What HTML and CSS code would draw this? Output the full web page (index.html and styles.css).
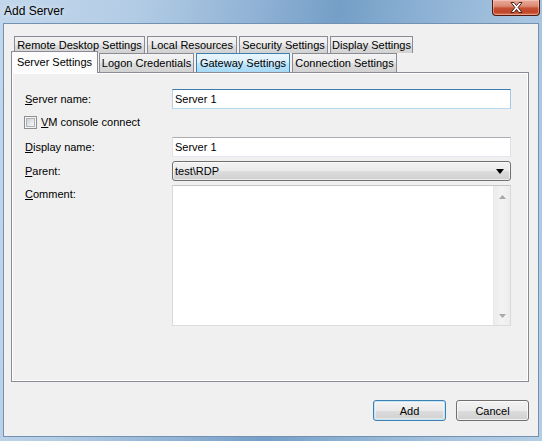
FILE: index.html
```html
<!DOCTYPE html>
<html>
<head>
<meta charset="utf-8">
<link rel="stylesheet" href="styles.css">
</head>
<body>
<div class="window">
  <div class="titlebar">
    <span class="title">Add Server</span>
    <div class="close">
      <svg width="13" height="11" viewBox="0 0 13 11"><polygon points="1,0.5 4,0.5 6.5,3.6 9,0.5 12,0.5 8.1,5.5 12,10.5 9,10.5 6.5,7.4 4,10.5 1,10.5 4.9,5.5" fill="#fff" stroke="#3a140c" stroke-width="0.9" stroke-linejoin="round"/></svg>
    </div>
  </div>
  <div class="client">
    <div class="tabs">
      <div class="tabrow back">
        <div class="tab w-rd">Remote Desktop Settings</div>
        <div class="tab w-lr">Local Resources</div>
        <div class="tab w-ss">Security Settings</div>
        <div class="tab w-ds">Display Settings</div>
      </div>
      <div class="tabrow front">
        <div class="tab selected w-sv">Server Settings</div>
        <div class="tab w-lc">Logon Credentials</div>
        <div class="tab hover w-gw">Gateway Settings</div>
        <div class="tab w-cs">Connection Settings</div>
      </div>
    </div>
    <div class="panel">
      <div class="form">
        <div class="label r1"><u>S</u>erver name:</div>
        <div class="input focused r1">Server 1</div>
        <div class="check r2"><span class="cb"><span class="cb-in"></span></span><span><u>V</u>M console connect</span></div>
        <div class="label r3"><u>D</u>isplay name:</div>
        <div class="input r3">Server 1</div>
        <div class="label r4"><u>P</u>arent:</div>
        <div class="select r4"><span>test\RDP</span>
          <svg class="arrow" width="8" height="5" viewBox="0 0 8 5"><polygon points="0,0 8,0 4,5" fill="#000"/></svg>
        </div>
        <div class="label comment r5"><u>C</u>omment:</div>
        <div class="textarea r5">
          <div class="scrollbar">
            <svg width="7" height="4" viewBox="0 0 7 4"><polygon points="3.5,0 7,4 0,4" fill="#a8a8a8"/></svg>
            <svg width="7" height="4" viewBox="0 0 7 4"><polygon points="0,0 7,0 3.5,4" fill="#a8a8a8"/></svg>
          </div>
        </div>
      </div>
    </div>
    <div class="buttons">
      <div class="btn default">Add</div>
      <div class="btn">Cancel</div>
    </div>
  </div>
</div>
</body>
</html>
```
FILE: styles.css
```css
html, body {
  margin: 0;
  padding: 0;
}
body {
  width: 542px;
  height: 441px;
  overflow: hidden;
  font-family: "Liberation Sans", Arial, sans-serif;
  font-size: 11px;
  color: #000;
}
.window {
  width: 542px;
  height: 441px;
  box-sizing: border-box;
  display: flex;
  flex-direction: column;
  background: linear-gradient(100deg, #c2d7ec 0%, #b3cce5 22%, #93b4d6 40%, #759fc7 55%, #8bb0d3 68%, #a7c4e0 85%, #b4cee6 100%);
}
.titlebar {
  position: relative;
  height: 23px;
  flex: none;
  display: flex;
  align-items: center;
}
.title {
  margin-left: 4px;
  margin-top: -2px;
  font-size: 12px;
  color: #000;
  text-shadow: 0 0 6px rgba(255,255,255,0.8);
}
.close {
  position: absolute;
  top: 0;
  right: 2px;
  width: 48px;
  height: 16px;
  box-sizing: border-box;
  border: 1px solid #4e1a10;
  border-top: none;
  border-radius: 0 0 4px 4px;
  background: linear-gradient(#e9ab9b 0%, #dc8c77 40%, #c65033 55%, #c04428 80%, #d8765a 100%);
  box-shadow: inset 0 0 0 1px rgba(255,220,210,0.45);
  display: flex;
  align-items: center;
  justify-content: center;
}
.client {
  margin: 0 3px;
  height: 414px;
  box-sizing: border-box;
  border: 1px solid #7391b1;
  background: #f0f0f0;
  padding: 12px 0 0 7px;
}
.tabs {
  width: 518px;
}
.tabrow {
  display: flex;
  gap: 2px;
}
.tabrow.back {
  height: 17px;
  margin-left: 3px;
}
.tabrow.front {
  height: 19px;
  align-items: flex-end;
}
.tab {
  box-sizing: border-box;
  border: 1px solid #898c95;
  border-bottom: none;
  background: linear-gradient(#f3f3f3 0%, #ebebeb 50%, #dedede 51%, #d2d2d2 100%);
  text-align: center;
  white-space: nowrap;
  display: flex;
  align-items: center;
  justify-content: center;
}
.back .tab { height: 17px; }
.front .tab { height: 19px; }
.front .tab.selected {
  position: relative;
  z-index: 2;
  height: 22px;
  margin-bottom: -1px;
  margin-right: -1px;
  background: #fcfcfc;
  padding-bottom: 2px;
}
.tab.hover {
  border-color: #3c7fb1;
  background: linear-gradient(#eaf6fd 0%, #d9f0fc 50%, #bee6fd 51%, #a7d9f5 100%);
}
.w-rd { width: 131px; }
.w-lr { width: 90px; }
.w-ss { width: 89px; }
.w-ds { width: 83px; }
.w-sv { width: 87px; }
.w-lc { width: 95px; }
.w-gw { width: 94px; }
.w-cs { width: 105px; }

.panel {
  width: 518px;
  height: 310px;
  box-sizing: border-box;
  border: 1px solid #898c95;
  box-shadow: inset 0 0 0 1px #ffffff;
  background: #f0f0f0;
  padding: 16px 17px 0 12px;
}
.form {
  display: grid;
  grid-template-columns: 148px 339px;
  grid-template-rows: 20px 28px 24px 24px 141px;
}
.r1 { grid-row: 1; }
.r2 { grid-row: 2; }
.r3 { grid-row: 3; }
.r4 { grid-row: 4; }
.r5 { grid-row: 5; }
.label {
  grid-column: 1;
  height: 20px;
  line-height: 20px;
  padding-left: 1px;
}
.label.comment {
  line-height: 18px;
}
.input {
  grid-column: 2;
  height: 20px;
  box-sizing: border-box;
  border: 1px solid;
  border-color: #abadb3 #dbdfe6 #e3e9ef #e2e3ea;
  background: #fff;
  line-height: 18px;
  padding-left: 2px;
}
.input.focused {
  border-color: #3d7bad #a4c9e3 #b7d9ed #b5cfe7;
}
.check {
  grid-column: 1 / 3;
  display: flex;
  align-items: center;
  gap: 4px;
  height: 28px;
  margin-top: -1px;
}
.cb {
  width: 13px;
  height: 13px;
  box-sizing: border-box;
  border: 1px solid #8e8f8f;
  background: #f4f4f4;
  padding: 1px;
  display: flex;
}
.cb-in {
  flex: 1;
  border: 1px solid #aeb3b9;
  background: linear-gradient(135deg, #cbcfd5 0%, #e3e5e8 50%, #f6f6f6 100%);
}
.select {
  grid-column: 2;
  height: 20px;
  box-sizing: border-box;
  border: 1px solid #707070;
  border-radius: 3px;
  background: linear-gradient(#f2f2f2 0%, #ebebeb 50%, #dddddd 51%, #cfcfcf 100%);
  box-shadow: inset 0 0 0 1px rgba(255,255,255,0.6);
  display: flex;
  align-items: center;
  justify-content: space-between;
  padding: 0 6px 0 2px;
}
.arrow {
  display: block;
}
.textarea {
  grid-column: 2;
  height: 141px;
  box-sizing: border-box;
  border: 1px solid;
  border-color: #c5c5c5 #d9d9d9 #dcdcdc #d9d9d9;
  background: #fff;
  display: flex;
  justify-content: flex-end;
}
.scrollbar {
  width: 17px;
  box-sizing: border-box;
  border-left: 1px solid #e8e8e8;
  background: linear-gradient(90deg, #ececec, #f3f3f3 50%, #ececec);
  display: flex;
  flex-direction: column;
  justify-content: space-between;
  align-items: center;
  padding: 9px 0 7px;
}
.scrollbar svg { display: block; }
.buttons {
  width: 518px;
  display: flex;
  justify-content: flex-end;
  gap: 10px;
  margin-top: 18px;
}
.btn {
  width: 73px;
  height: 21px;
  box-sizing: border-box;
  border: 1px solid #707070;
  border-radius: 3px;
  background: linear-gradient(#f2f2f2 0%, #ebebeb 50%, #dddddd 51%, #cfcfcf 100%);
  box-shadow: inset 0 0 0 1px rgba(255,255,255,0.7);
  display: flex;
  align-items: center;
  justify-content: center;
}
.btn.default {
  border-color: #3c7fb1;
  box-shadow: inset 0 0 0 1px #c4e5f6, inset 0 0 0 2px rgba(255,255,255,0.4);
}
```
